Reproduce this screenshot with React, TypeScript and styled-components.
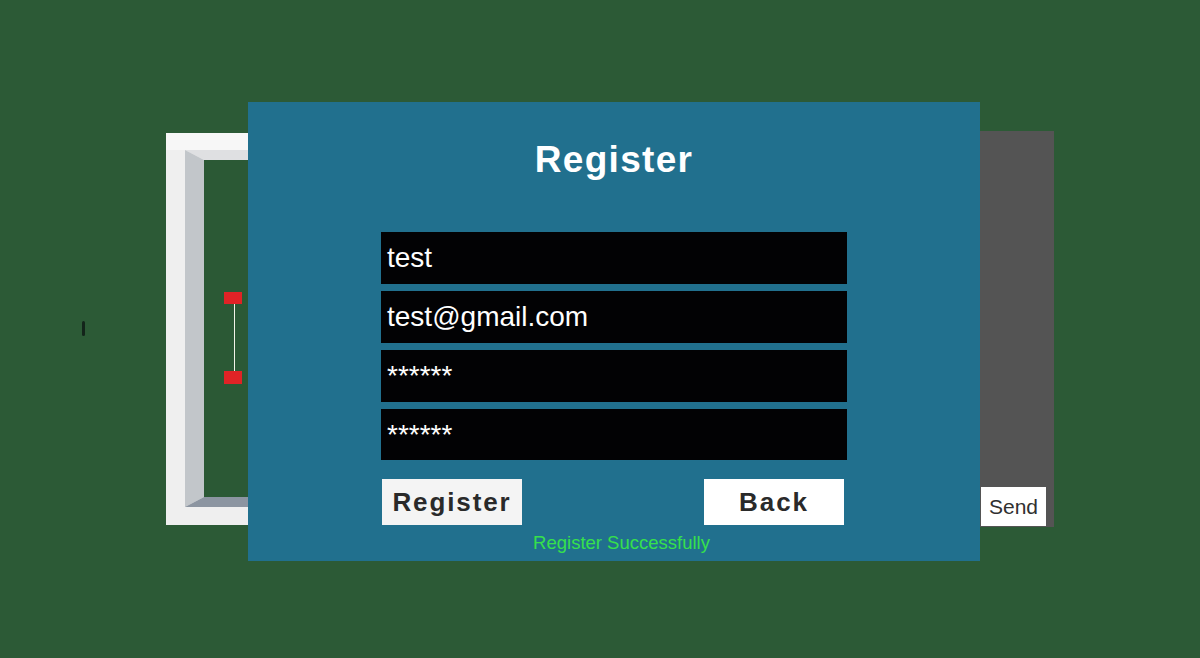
import React from "react";
import styled, { createGlobalStyle } from "styled-components";

const GlobalStyle = createGlobalStyle`
  html, body {
    margin: 0;
    padding: 0;
    background: #2c5a36;
  }
  body {
    font-family: "Liberation Sans", Arial, sans-serif;
  }
`;

const fields = [
  { key: "name", value: "test", height: 52 },
  { key: "email", value: "test@gmail.com", height: 52 },
  { key: "password", value: "******", height: 52 },
  { key: "confirm", value: "******", height: 51 },
];

// door frame seen from the front, the right half sits behind the dialog
const DoorFrame: React.FC = () => (
  <FrameSvg width="130" height="392" viewBox="0 0 130 392">
    <rect x="0" y="0" width="130" height="392" fill="#efefef" />
    <rect x="0" y="0" width="130" height="17" fill="#f7f7f7" />
    <rect x="38" y="27" width="92" height="337" fill="#2b5935" />
    <polygon points="19,17 130,17 130,27 38,27" fill="#dfe0e2" />
    <polygon points="19,17 38,27 38,364 19,374" fill="#c2c6ca" />
    <polygon points="38,364 130,364 130,374 19,374" fill="#8c95a1" />
    <line x1="68.5" y1="171" x2="68.5" y2="238" stroke="#f2f2e8" strokeWidth="1" />
    <rect x="58" y="159" width="18" height="12" fill="#e02326" />
    <rect x="58" y="238" width="18" height="13" fill="#e02326" />
  </FrameSvg>
);

const App: React.FC = () => {
  return (
    <>
      <GlobalStyle />
      <Scene>
        <Speck />
        <DoorFrame />
        <SidePanel>
          <SendButton>Send</SendButton>
        </SidePanel>

        <Dialog>
          <Title>Register</Title>
          <Form>
            {fields.map((f) => (
              <Field key={f.key} $height={f.height}>
                {f.value}
              </Field>
            ))}
          </Form>
          <ButtonRow>
            <ActionButton $tint="#f4f4f4">Register</ActionButton>
            <ActionButton $tint="#ffffff">Back</ActionButton>
          </ButtonRow>
          <Status>Register Successfully</Status>
        </Dialog>
      </Scene>
    </>
  );
};

const Scene = styled.div`
  position: relative;
  width: 1200px;
  height: 658px;
  overflow: hidden;
  background: #2c5a36;
`;

const Speck = styled.div`
  position: absolute;
  left: 82px;
  top: 321px;
  width: 3px;
  height: 15px;
  border-radius: 1.5px;
  background: #13241a;
  filter: blur(0.6px);
`;

const FrameSvg = styled.svg`
  position: absolute;
  left: 166px;
  top: 133px;
  display: block;
`;

const SidePanel = styled.div`
  position: absolute;
  left: 980px;
  top: 131px;
  width: 74px;
  height: 396px;
  background: #545454;
  display: flex;
  flex-direction: column;
  justify-content: flex-end;
  align-items: flex-start;
  padding: 0 0 1px 1px;
  box-sizing: border-box;
`;

const SendButton = styled.div`
  width: 65px;
  height: 39px;
  background: #ffffff;
  color: #303030;
  font-size: 21px;
  display: flex;
  align-items: center;
  justify-content: center;
`;

const Dialog = styled.div`
  position: absolute;
  left: 248px;
  top: 102px;
  width: 732px;
  height: 459px;
  background: #21708e;
  display: flex;
  flex-direction: column;
  align-items: center;
  padding-top: 36px;
  box-sizing: border-box;
`;

const Title = styled.div`
  color: #ffffff;
  font-size: 37px;
  font-weight: 700;
  line-height: 44px;
  letter-spacing: 1.3px;
`;

const Form = styled.div`
  margin-top: 50px;
  width: 466px;
  display: flex;
  flex-direction: column;
  gap: 7px;
`;

const Field = styled.div<{ $height: number }>`
  height: ${(p) => p.$height}px;
  background: #020204;
  color: #ffffff;
  font-size: 28px;
  padding-left: 6px;
  display: flex;
  align-items: center;
  box-sizing: border-box;
`;

const ButtonRow = styled.div`
  margin-top: 19px;
  margin-right: 2px;
  width: 462px;
  display: flex;
  justify-content: space-between;
`;

const ActionButton = styled.div<{ $tint: string }>`
  width: 140px;
  height: 46px;
  background: ${(p) => p.$tint};
  color: #2a2a2a;
  font-size: 26px;
  font-weight: 700;
  letter-spacing: 1.9px;
  display: flex;
  align-items: center;
  justify-content: center;
`;

const Status = styled.div`
  margin-top: 7px;
  padding-left: 15px;
  color: #36e04c;
  font-size: 18.5px;
`;

export default App;
